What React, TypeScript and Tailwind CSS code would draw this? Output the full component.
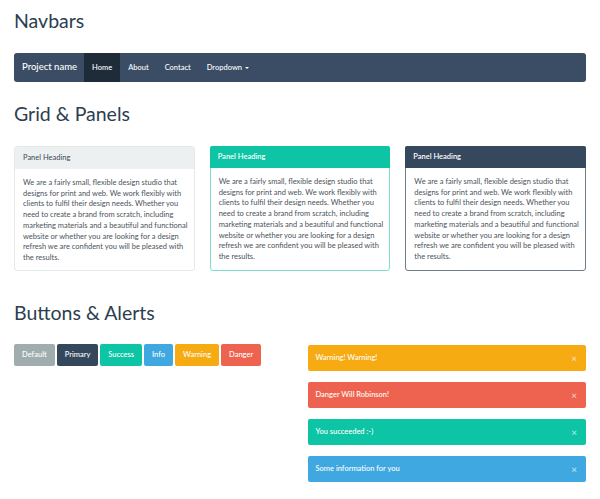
import React from "react";

const lines = [
  "We are a fairly small, flexible design studio that",
  "designs for print and web. We work flexibly with",
  "clients to fulfil their design needs. Whether you",
  "need to create a brand from scratch, including",
  "marketing materials and a beautiful and functional",
  "website or whether you are looking for a design",
  "refresh we are confident you will be pleased with",
  "the results.",
];

function Body() {
  return (
    <div className="px-[8px] pt-[9px] pb-[6px] text-[7.5px] leading-[10.7px] text-[#4a535b]">
      {lines.map((l, i) => (
        <div key={i} className="whitespace-nowrap">
          {l}
        </div>
      ))}
    </div>
  );
}

export default function App() {
  return (
    <div className="w-[600px] h-[499px] bg-white font-['Lato','Noto_Sans',sans-serif] text-[#2c3e50] px-[14px] overflow-hidden">
      <h1 className="pt-[10px] text-[19.5px] leading-[22px] font-normal">Navbars</h1>

      <nav className="mt-[21px] h-[29px] rounded-[3px] bg-[#3a4d64] flex items-stretch text-white font-medium">
        <div className="pl-[8px] pr-[7px] flex items-center text-[9.5px]">Project name</div>
        <div className="px-[8px] flex items-center text-[7.5px] bg-[#1e2c3a]">Home</div>
        <div className="px-[8px] flex items-center text-[7.5px]">About</div>
        <div className="px-[8px] flex items-center text-[7.5px]">Contact</div>
        <div className="px-[8px] flex items-center text-[7.5px] gap-[2px]">
          Dropdown
          <span className="inline-block w-0 h-0 border-l-[2px] border-r-[2px] border-t-[2px] border-l-transparent border-r-transparent border-t-white ml-[1px]" />
        </div>
      </nav>

      <h1 className="mt-[21px] text-[19.5px] leading-[22px] font-normal">Grid &amp; Panels</h1>

      <div className="mt-[21px] grid grid-cols-3 gap-[15px]">
        <div className="rounded-[3px] border border-[#e5e9ea] bg-white">
          <div className="h-[22px] bg-[#ecf0f1] px-[8px] flex items-center text-[7.5px] text-[#3d4a55] rounded-t-[2px]">
            Panel Heading
          </div>
          <Body />
        </div>
        <div className="rounded-[3px] border border-[#7fe0cd] bg-white">
          <div className="h-[22px] bg-[#0dc4a5] px-[8px] flex items-center text-[7.5px] text-white font-semibold rounded-t-[2px] -mx-px -mt-px">
            Panel Heading
          </div>
          <Body />
        </div>
        <div className="rounded-[3px] border border-[#6f7c89] bg-white">
          <div className="h-[22px] bg-[#35485e] px-[8px] flex items-center text-[7.5px] text-white font-semibold rounded-t-[2px] -mx-px -mt-px">
            Panel Heading
          </div>
          <Body />
        </div>
      </div>

      <h1 className="mt-[31px] text-[19.5px] leading-[22px] font-normal">Buttons &amp; Alerts</h1>

      <div className="mt-[20px] grid grid-cols-2 gap-[15px] font-medium">
        <div className="flex items-start gap-[2px]">
          <div className="h-[22px] px-[8px] rounded-[2px] bg-[#a0adae] text-white text-[7.5px] flex items-center">Default</div>
          <div className="h-[22px] px-[8px] rounded-[2px] bg-[#34475d] text-white text-[7.5px] flex items-center">Primary</div>
          <div className="h-[22px] px-[8px] rounded-[2px] bg-[#0dc4a5] text-white text-[7.5px] flex items-center">Success</div>
          <div className="h-[22px] px-[8px] rounded-[2px] bg-[#3fa8e0] text-white text-[7.5px] flex items-center">Info</div>
          <div className="h-[22px] px-[8px] rounded-[2px] bg-[#f6ab12] text-white text-[7.5px] flex items-center">Warning</div>
          <div className="h-[22px] px-[8px] rounded-[2px] bg-[#ee634f] text-white text-[7.5px] flex items-center">Danger</div>
        </div>
        <div className="flex flex-col gap-[11px] pt-[1px]">
          {[
            ["Warning! Warning!", "bg-[#f6ab12]"],
            ["Danger Will Robinson!", "bg-[#ee634f]"],
            ["You succeeded :-)", "bg-[#0dc4a5]"],
            ["Some information for you", "bg-[#3fa8e0]"],
          ].map(([t, c]) => (
            <div key={t} className={`h-[26px] rounded-[2px] ${c} flex items-center justify-between pl-[8px] pr-[9px] text-white text-[7.5px]`}>
              <span>{t}</span>
              <span className="text-white/70 text-[10px] leading-none">×</span>
            </div>
          ))}
        </div>
      </div>
    </div>
  );
}
